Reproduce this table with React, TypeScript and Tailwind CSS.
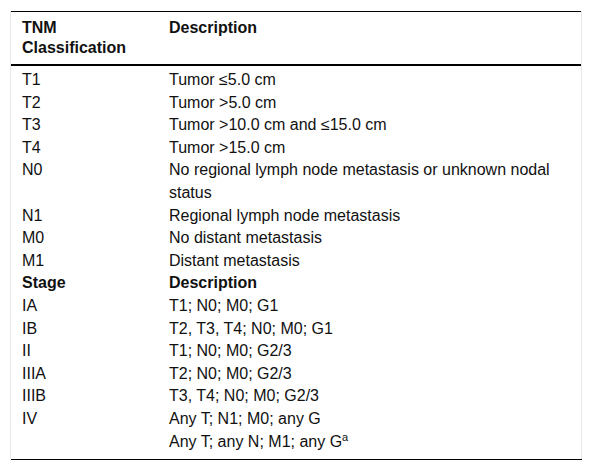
const rows: { code: string; desc: React.ReactNode; bold?: boolean }[] = [
  { code: 'T1', desc: 'Tumor ≤5.0 cm' },
  { code: 'T2', desc: 'Tumor >5.0 cm' },
  { code: 'T3', desc: 'Tumor >10.0 cm and ≤15.0 cm' },
  { code: 'T4', desc: 'Tumor >15.0 cm' },
  { code: 'N0', desc: 'No regional lymph node metastasis or unknown nodal status' },
  { code: 'N1', desc: 'Regional lymph node metastasis' },
  { code: 'M0', desc: 'No distant metastasis' },
  { code: 'M1', desc: 'Distant metastasis' },
  { code: 'Stage', desc: 'Description', bold: true },
  { code: 'IA', desc: 'T1; N0; M0; G1' },
  { code: 'IB', desc: 'T2, T3, T4; N0; M0; G1' },
  { code: 'II', desc: 'T1; N0; M0; G2/3' },
  { code: 'IIIA', desc: 'T2; N0; M0; G2/3' },
  { code: 'IIIB', desc: 'T3, T4; N0; M0; G2/3' },
  { code: 'IV', desc: 'Any T; N1; M0; any G' },
  {
    code: '',
    desc: (
      <>
        Any T; any N; M1; any G<sup className="text-[11px] relative -top-[6px]">a</sup>
      </>
    ),
  },
];

const App = () => {
  return (
    <div className="w-[592px] h-[472px] bg-white pt-[11px] pl-[10px] font-['Liberation_Sans',Arial,sans-serif] text-[16px] text-[#111]">
      <div className="w-[572px] border-x border-[#e8e8e8]">
        <table className="w-full border-collapse">
          <thead>
            <tr className="border-t border-black border-b-2">
              <th className="w-[147px] text-left align-top font-bold pl-[11px] pt-[6px] pb-[6px] leading-[20px]">
                TNM
                <br />
                Classification
              </th>
              <th className="text-left align-top font-bold pl-[11px] pt-[6px] pb-[6px] leading-[20px]">
                Description
              </th>
            </tr>
          </thead>
          <tbody>
            {rows.map((r, i) => (
              <tr key={i}>
                <td
                  className={`align-top pl-[11px] leading-[22.6px] ${r.bold ? 'font-bold' : ''} ${i === 0 ? 'pt-[3px]' : ''}`}
                >
                  {r.code}
                </td>
                <td
                  className={`align-top pl-[11px] pr-[20px] leading-[22.6px] ${r.bold ? 'font-bold' : ''} ${i === 0 ? 'pt-[3px]' : ''}`}
                >
                  {r.desc}
                </td>
              </tr>
            ))}
          </tbody>
        </table>
        <div className="h-[6px]" />
      </div>
      <div className="w-[571px] ml-[1px] border-t border-black" />
    </div>
  );
};

export default App;
